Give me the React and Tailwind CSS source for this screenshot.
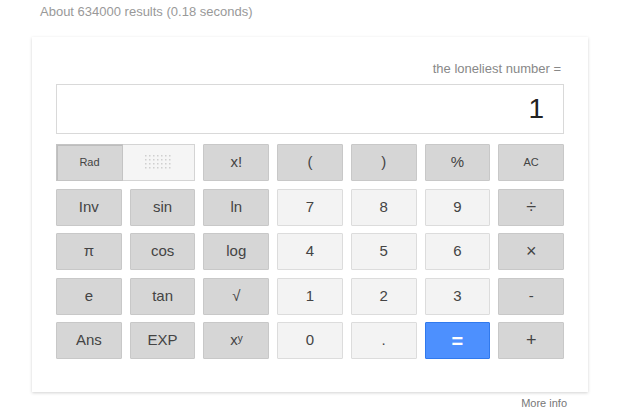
import React from 'react';

const dark = 'bg-[#d6d6d6] border border-[#c8c8c8] text-[#444]';
const light = 'bg-[#f3f3f3] border border-[#dcdcdc] text-[#444]';
const blue = 'bg-[#4d90fe] border border-[#3079ed] text-white';

const ROWS = [
  [
    { label: 'x!', kind: dark },
    { label: '(', kind: dark },
    { label: ')', kind: dark },
    { label: '%', kind: dark },
    { label: 'AC', kind: dark, small: true },
  ],
  [
    { label: 'Inv', kind: dark },
    { label: 'sin', kind: dark },
    { label: 'ln', kind: dark },
    { label: '7', kind: light },
    { label: '8', kind: light },
    { label: '9', kind: light },
    { label: '÷', kind: dark, op: true },
  ],
  [
    { label: 'π', kind: dark },
    { label: 'cos', kind: dark },
    { label: 'log', kind: dark },
    { label: '4', kind: light },
    { label: '5', kind: light },
    { label: '6', kind: light },
    { label: '×', kind: dark, op: true },
  ],
  [
    { label: 'e', kind: dark },
    { label: 'tan', kind: dark },
    { label: '√', kind: dark },
    { label: '1', kind: light },
    { label: '2', kind: light },
    { label: '3', kind: light },
    { label: '-', kind: dark },
  ],
  [
    { label: 'Ans', kind: dark },
    { label: 'EXP', kind: dark },
    { label: 'xʸ', kind: dark },
    { label: '0', kind: light },
    { label: '.', kind: light },
    { label: '=', kind: blue, big: true },
    { label: '+', kind: dark, op: true },
  ],
];

function Dots() {
  const dots = [];
  for (let r = 0; r < 4; r++) {
    for (let c = 0; c < 7; c++) {
      dots.push(<rect key={`${r}-${c}`} x={c * 4} y={r * 4} width="1.5" height="1.5" fill="#cfcfcf" />);
    }
  }
  return (
    <svg width="27" height="15" viewBox="0 0 27 15">
      {dots}
    </svg>
  );
}

function Key({ k }) {
  let size = 'text-[15px]';
  if (k.small) size = 'text-[11px]';
  if (k.op) size = 'text-[18px]';
  if (k.big) size = 'text-[20px] font-bold';
  return (
    <button className={`h-[37px] flex items-center justify-center rounded-[1px] ${k.kind} ${size}`}>
      {k.label}
    </button>
  );
}

export default function App() {
  return (
    <div className="w-[624px] h-[417px] bg-white font-['Liberation_Sans',Arial,sans-serif] overflow-hidden">
      <div className="pl-[40px] pt-[2px] h-[37px] text-[13px] text-[#999]">About 634000 results (0.18 seconds)</div>

      <div className="ml-[32px] w-[556px] bg-white shadow-[0_1px_3px_rgba(0,0,0,0.18)] px-[24px] pt-[24px] pb-[33px]">
        <div className="text-right text-[13px] text-[#888] pr-[3px] h-[23px] leading-[16px]">the loneliest number =</div>

        <div className="h-[50px] border border-[#d9d9d9] flex items-center justify-end pr-[19px] text-[28px] text-[#222]">
          1
        </div>

        <div className="mt-[10px] grid grid-cols-7 gap-x-[8px] gap-y-[7.5px]">
          <div className="col-span-2 flex h-[37px]">
            <button className="w-[67px] bg-[#d6d6d6] border border-[#c4c4c4] shadow-[inset_1px_1px_0_#bdbdbd] text-[11px] text-[#444]">
              Rad
            </button>
            <button className="flex-1 bg-[#f5f5f5] border border-[#d4d4d4] border-l-0 flex items-center justify-center">
              <Dots />
            </button>
          </div>
          {ROWS.flat().map((k, i) => (
            <Key key={i} k={k} />
          ))}
        </div>
      </div>

      <div className="w-[567px] text-right text-[11px] text-[#777] mt-[3px]">More info</div>
    </div>
  );
}
